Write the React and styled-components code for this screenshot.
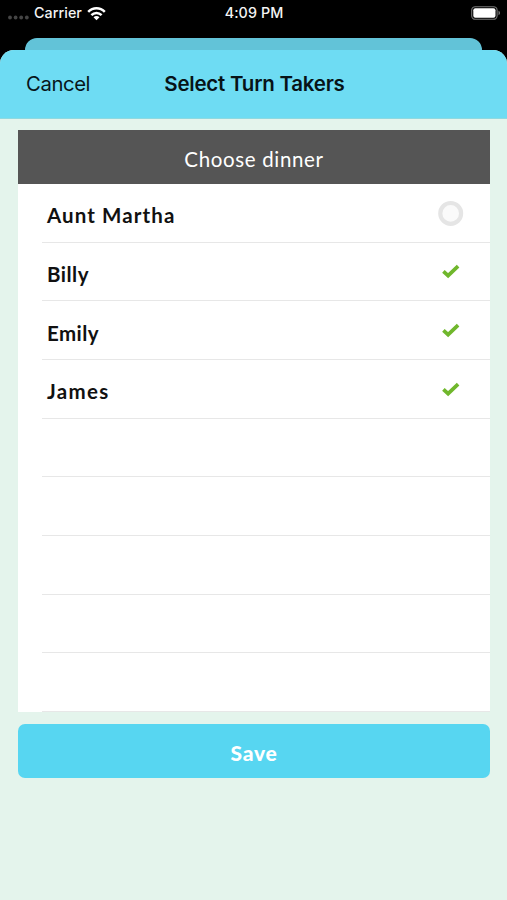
import React from 'react';
import styled, { createGlobalStyle } from 'styled-components';

const GlobalStyle = createGlobalStyle`
  * { box-sizing: border-box; }
  body { margin: 0; background: #000; }
`;

const system = '"Inter", "Liberation Sans", sans-serif';
const chalk = '"Chalkboard SE", "Lato", sans-serif';

const Screen = styled.div`
  display: flex;
  flex-direction: column;
  height: 900px;
  overflow: hidden;
  background: #000;
  font-family: ${system};
`;

const StatusBar = styled.header`
  display: grid;
  grid-template-columns: 1fr auto 1fr;
  align-items: center;
  flex: none;
  height: 38px;
  padding: 0 7px 12px 8px;
  color: #f4f4f4;
  font-size: 14.3px;
  line-height: 26px;
`;

const Network = styled.div`
  display: flex;
  align-items: center;
`;

const SignalDots = styled.svg`
  width: 21px;
  height: 5px;
  margin: 8px 5px 0 0;
`;

const Carrier = styled.span`
  font-weight: 500;
  letter-spacing: 0.05px;
`;

const WifiIcon = styled.svg`
  width: 19px;
  height: 15px;
  margin-left: 5px;
`;

const Time = styled.time`
  font-weight: 500;
  letter-spacing: 0.1px;
`;

const BatteryIcon = styled.svg`
  width: 30px;
  height: 14px;
  margin-right: -1px;
  justify-self: end;
`;

const BackSheet = styled.div`
  flex: none;
  height: 12px;
  margin: 0 25px;
  border-radius: 12px 12px 0 0;
  background: #62c3d8;
`;

const Sheet = styled.main`
  display: flex;
  flex-direction: column;
  flex: 1;
  overflow: hidden;
  border-radius: 14px 14px 0 0;
  background: #e4f4ec;
`;

const NavBar = styled.nav`
  display: grid;
  grid-template-columns: 1fr auto 1fr;
  align-items: center;
  height: 69px;
  padding: 0 24px 0 26px;
  border-bottom: 1px solid #8fd9e0;
  background: #6edcf3;
`;

const CancelButton = styled.button`
  justify-self: start;
  padding: 0;
  border: 0;
  background: none;
  color: #071519;
  font: 400 20.3px/26px ${system};
  letter-spacing: -0.4px;
`;

const Title = styled.h1`
  margin: 0;
  color: #071317;
  font-size: 20.5px;
  font-weight: 600;
  line-height: 26px;
  letter-spacing: -0.23px;
`;

const Content = styled.div`
  padding: 11px 17px 0 18px;
`;

const ListHeader = styled.h2`
  display: flex;
  align-items: center;
  justify-content: center;
  height: 54px;
  margin: 0;
  padding-top: 4px;
  background: #555;
  color: #fff;
  font: 400 20.5px/28px ${chalk};
  letter-spacing: 0.65px;
`;

const List = styled.ul`
  display: grid;
  grid-template-rows: repeat(9, 1fr);
  height: 528px;
  margin: 0;
  padding: 0 0 0 24px;
  list-style: none;
  background: #fff;
`;

const Row = styled.li`
  display: flex;
  align-items: center;
  justify-content: space-between;
  min-height: 0;
  padding: 0 26px 0 5px;
  border-bottom: 1px solid #e7e7e7;
`;

const Name = styled.span`
  padding-top: 5px;
  color: #111;
  font: 700 20.5px/28px ${chalk};
  letter-spacing: ${({ $tracking }) => $tracking}px;
`;

const StateIcon = styled.svg`
  width: 26px;
  height: 26px;
`;

const SaveButton = styled.button`
  display: block;
  width: 100%;
  height: 54px;
  margin-top: 12px;
  padding: 4px 0 0;
  border: 0;
  border-radius: 7px;
  background: #57d6f1;
  color: #fff;
  font: 900 21px/28px ${chalk};
  letter-spacing: 0.8px;
`;

const people = [
  { name: 'Aunt Martha', selected: false, tracking: 1.1 },
  { name: 'Billy', selected: true, tracking: 0.5 },
  { name: 'Emily', selected: true, tracking: 0.4 },
  { name: 'James', selected: true, tracking: 1.3 },
];

function Selection({ selected }) {
  return (
    <StateIcon viewBox="0 0 26 26">
      {selected ? (
        <path d="M5.4 13.4 10.1 17.7 20.1 8.2" fill="none" stroke="#70b72c" strokeWidth="3.7" />
      ) : (
        <circle cx="12.7" cy="13.4" r="10.4" fill="#fafafa" stroke="#e5e5e5" strokeWidth="4.2" />
      )}
    </StateIcon>
  );
}

export default function App() {
  return (
    <Screen>
      <GlobalStyle />
      <StatusBar>
        <Network>
          <SignalDots viewBox="0 0 21 5" fill="#454545">
            <circle cx="2" cy="2.5" r="1.9" />
            <circle cx="7.6" cy="2.5" r="1.9" />
            <circle cx="13.2" cy="2.5" r="1.9" />
            <circle cx="18.8" cy="2.5" r="1.9" />
          </SignalDots>
          <Carrier>Carrier</Carrier>
          <WifiIcon viewBox="0 0 19 15" fill="none" stroke="#fff" strokeWidth="2.5">
            <path d="M1.2 5.8C5.9 1 13.1 1 17.8 5.8" />
            <path d="M4.4 9.1c2.9-2.9 7.3-2.9 10.2 0" />
            <path d="M9.5 14.3 6.5 11.2c1.7-1.6 4.3-1.6 6 0z" fill="#fff" stroke="none" />
          </WifiIcon>
        </Network>
        <Time>4:09 PM</Time>
        <BatteryIcon viewBox="0 0 30 14">
          <rect x="0.7" y="0.7" width="25.4" height="12.6" rx="3.6" fill="none" stroke="#777" strokeWidth="1.1" />
          <rect x="2.3" y="2.2" width="22.2" height="9.6" rx="2" fill="#fff" />
          <path d="M27.5 4.8c2 .7 2 3.7 0 4.4z" fill="#777" />
        </BatteryIcon>
      </StatusBar>
      <BackSheet />
      <Sheet>
        <NavBar>
          <CancelButton>Cancel</CancelButton>
          <Title>Select Turn Takers</Title>
        </NavBar>
        <Content>
          <ListHeader>Choose dinner</ListHeader>
          <List>
            {people.map(({ name, selected, tracking }) => (
              <Row key={name}>
                <Name $tracking={tracking}>{name}</Name>
                <Selection selected={selected} />
              </Row>
            ))}
            {Array.from({ length: 5 }, (_, i) => (
              <Row key={i} />
            ))}
          </List>
          <SaveButton>Save</SaveButton>
        </Content>
      </Sheet>
    </Screen>
  );
}
